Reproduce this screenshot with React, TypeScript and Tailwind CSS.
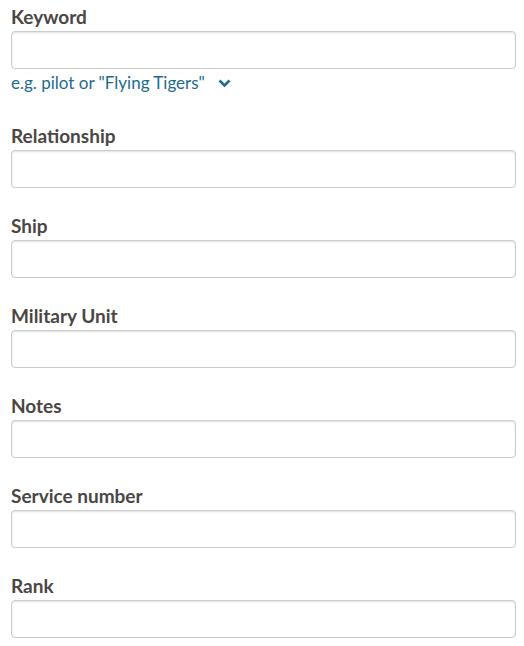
import React from "react";

const fields = ["Relationship", "Ship", "Military Unit", "Notes", "Service number", "Rank"];

function Field({ label, hint }: { label: string; hint?: boolean }) {
  return (
    <div className="flex flex-col">
      <label className="text-[19px] leading-[22px] font-bold text-[#4a4643] mb-[3px]">{label}</label>
      <input
        type="text"
        className="h-[38px] w-full rounded-[4px] border border-[#cccccc] bg-white shadow-[inset_0_1px_2px_rgba(0,0,0,0.12)] outline-none"
      />
      {hint && (
        <div className="flex items-center mt-[2px] h-[24px] text-[17px] text-[#1e6b8c]">
          <span>e.g. pilot or "Flying Tigers"</span>
          <svg className="ml-[13px]" width="13" height="9" viewBox="0 0 13 9">
            <path d="M1.5 1.5 L6.5 6.5 L11.5 1.5" fill="none" stroke="#1e6b8c" strokeWidth="2.6" />
          </svg>
        </div>
      )}
    </div>
  );
}

export default function App() {
  return (
    <div className="bg-white w-[524px] h-[646px] pl-[11px] pr-[8px] pt-[6px] font-['Lato',sans-serif]">
      <div className="flex flex-col">
        <div className="mb-[30px]">
          <Field label="Keyword" hint />
        </div>
        <div className="flex flex-col gap-[27px]">
          {fields.map((f) => (
            <Field key={f} label={f} />
          ))}
        </div>
      </div>
    </div>
  );
}
